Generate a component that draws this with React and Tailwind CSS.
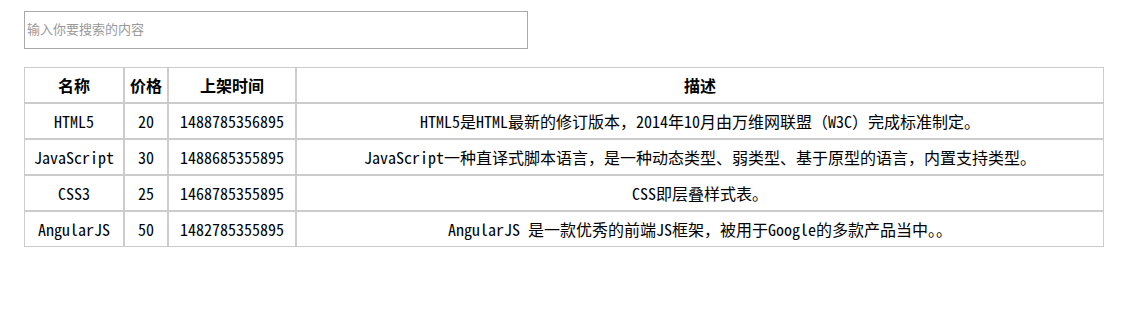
import React from "react";

const rows = [
  ["HTML5", "20", "1488785356895", "HTML5是HTML最新的修订版本，2014年10月由万维网联盟（W3C）完成标准制定。"],
  ["JavaScript", "30", "1488685355895", "JavaScript一种直译式脚本语言，是一种动态类型、弱类型、基于原型的语言，内置支持类型。"],
  ["CSS3", "25", "1468785355895", "CSS即层叠样式表。"],
  ["AngularJS", "50", "1482785355895", "AngularJS 是一款优秀的前端JS框架，被用于Google的多款产品当中。。"],
];

export default function App() {
  return (
    <div
      className="bg-white text-black pl-[24px] pt-[11px] h-[319px]"
      style={{ fontFamily: '"Noto Sans Mono CJK SC", "Liberation Mono", "Noto Sans CJK SC", monospace' }}
    >
      <input
        type="text"
        placeholder="输入你要搜索的内容"
        className="block w-[504px] h-[38px] border border-[#a9a9a9] pl-[2px] pr-[2px] pt-0 pb-[4px] text-[13px] placeholder:text-[#999999] outline-none"
        style={{ fontFamily: '"Noto Sans CJK SC", sans-serif' }}
      />
      <table className="mt-[18px] w-[1080px] table-fixed border-separate border-spacing-0 text-[16px]">
        <colgroup>
          <col className="w-[100px]" />
          <col className="w-[44px]" />
          <col className="w-[128px]" />
          <col />
        </colgroup>
        <thead>
          <tr>
            {["名称", "价格", "上架时间", "描述"].map((h) => (
              <th
                key={h}
                className="h-[36px] p-0 border border-[#cccccc] font-bold text-center align-middle"
                style={{ fontFamily: '"Noto Sans CJK SC", sans-serif' }}
              >
                {h}
              </th>
            ))}
          </tr>
        </thead>
        <tbody>
          {rows.map((r) => (
            <tr key={r[0]}>
              {r.map((c, i) => (
                <td key={i} className="h-[36px] p-0 border border-[#cccccc] text-center align-middle whitespace-nowrap">
                  {c}
                </td>
              ))}
            </tr>
          ))}
        </tbody>
      </table>
    </div>
  );
}
